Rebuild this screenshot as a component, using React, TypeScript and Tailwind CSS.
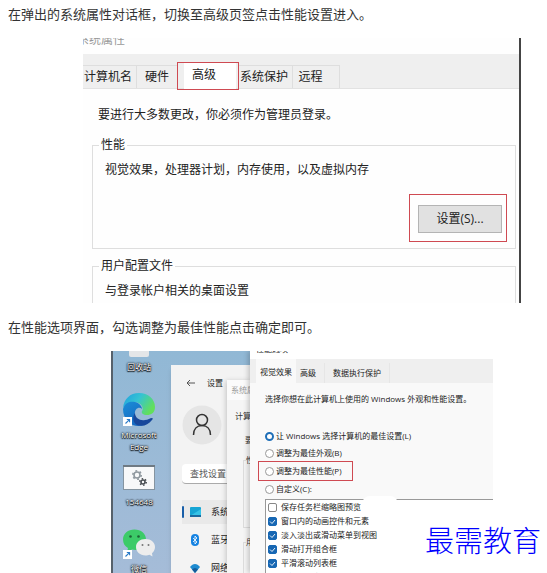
import { useState } from "react";
import type { ReactNode } from "react";

const systemTabs = ["计算机名", "硬件", "高级", "系统保护", "远程"];

const effectModes = [
  "让 Windows 选择计算机的最佳设置(L)",
  "调整为最佳外观(B)",
  "调整为最佳性能(P)",
  "自定义(C):",
];

const effects = [
  { label: "保存任务栏缩略图预览", on: false },
  { label: "窗口内的动画控件和元素", on: true },
  { label: "淡入淡出或滑动菜单到视图", on: true },
  { label: "滑动打开组合框", on: true },
  { label: "平滑滚动列表框", on: true },
  { label: "平滑屏幕字体边缘", on: true },
];

function Shortcut() {
  return (
    <g>
      <rect x="0" y="24" width="9" height="9" fill="#fff" />
      <path d="M2.5 30.5 6.2 26.8M3.8 26.5h2.8v2.8" fill="none" stroke="#2b7bc8" strokeWidth="1.1" />
    </g>
  );
}

function EdgeIcon() {
  return (
    <svg width="32" height="34" viewBox="0 0 32 34" aria-hidden="true">
      <defs>
        <linearGradient id="edge-top" x1="0" y1="0" x2="1" y2="0.5">
          <stop offset="0" stopColor="#1e9fe0" />
          <stop offset="0.5" stopColor="#35c3d3" />
          <stop offset="1" stopColor="#62df5c" />
        </linearGradient>
        <linearGradient id="edge-left" x1="0" y1="0" x2="0.6" y2="1">
          <stop offset="0" stopColor="#1a8ed8" />
          <stop offset="1" stopColor="#1667c0" />
        </linearGradient>
      </defs>
      <path d="M0 15C1 6 7 0 16 0c9 0 16 6 16 14 0 6-4 8-8 8-4 0-6-2-5-4 1-1 1-3 0-5C16 8 5 7 0 15Z" fill="url(#edge-top)" />
      <path d="M0 16C2 9 8 8 12 9c5 1 7 5 7 7-3-3-8 0-7 6 1 5 5 9 9 10-9 4-21-3-21-16Z" fill="url(#edge-left)" />
      <path d="M12 20c0 5 5 8 10 7 3 0 5-2 7-2 1 0 1 1 0 2-4 5-9 7-15 5-4-2-5-8-2-12Z" fill="#17479b" />
      <Shortcut />
    </svg>
  );
}

function Gear({ x, y, r, color }: { x: number; y: number; r: number; color: string }) {
  return (
    <g fill="none" stroke={color}>
      <circle cx={x} cy={y} r={r} strokeWidth="1.6" />
      <circle cx={x} cy={y} r={r + 1.2} strokeWidth="1.6" strokeDasharray={`${(r + 1.2) * 0.45} ${(r + 1.2) * 0.597}`} />
    </g>
  );
}

function BatchIcon() {
  return (
    <svg width="32" height="25" viewBox="0 0 32 25" aria-hidden="true">
      <rect x="0.5" y="0.5" width="31" height="24" fill="#f7f8f9" stroke="#8594a0" />
      <rect width="32" height="2" fill="#6f7a83" />
      <Gear x={14} y={10} r={3} color="#8f989f" />
      <Gear x={20} y={17} r={2} color="#4a4f54" />
    </svg>
  );
}

function WechatIcon() {
  return (
    <svg width="32" height="33" viewBox="0 0 32 33" aria-hidden="true">
      <path d="M11.500 3.500C5 3.500 0 7.500 0 13.500c0 4 2 7 5 8.500l-1 4 5-2.500c8 2 14-3 14-10C23 7.500 18 3.500 11.500 3.500Z" fill="#3ccb68" />
      <path d="M22.500 13C17 13 13 16.500 13 21s4 8.500 9.500 8.500c1.500 0 3-.3 4-.8l3 1.800-.5-3.200c1.800-1.500 3-3.800 3-6.300 0-4.500-4-8-9.500-8Z" fill="#ededed" />
      <circle cx="7.500" cy="10.500" r="1.300" fill="#1c6336" />
      <circle cx="15.500" cy="10.500" r="1.300" fill="#1c6336" />
      <circle cx="19.500" cy="19" r="1" fill="#777" />
      <circle cx="25.500" cy="19" r="1" fill="#777" />
      <Shortcut />
    </svg>
  );
}

function DesktopLabel({ children }: { children: ReactNode }) {
  return (
    <span className="text-center text-[8px] leading-[12px] text-white [text-shadow:0_0_2px_#000,0_0_2px_#000,0_1px_1px_#000]">
      {children}
    </span>
  );
}

function SystemProperties() {
  return (
    <section className="h-[265px] overflow-hidden border-r-2 border-[#444] bg-[#fefefe] text-xs leading-4 text-[#222]">
      <div className="flex h-2 items-end overflow-hidden text-[#999]">
        <h2 className="-ml-1.5 leading-3">系统属性</h2>
      </div>
      <div className="mt-2 flex h-[35px] items-end border-b border-[#e2e2e2] bg-[#efefef]">
        {systemTabs.map((tab) =>
          tab === "高级" ? (
            <button key={tab} className="-mb-0.5 flex h-7 w-[62px] border border-[#cf4a52] pr-0.5 pl-1.5">
              <span className="flex-1 bg-white pt-1 pl-2 text-left whitespace-nowrap">{tab}</span>
            </button>
          ) : (
            <button
              key={tab}
              className="h-[23px] border-t border-r border-[#dedede] pr-1 pl-px whitespace-nowrap nth-2:w-10 nth-2:border-r-0 nth-2:pl-1 nth-5:w-[47px] nth-5:pr-3"
            >
              {tab}
            </button>
          ),
        )}
      </div>
      <div className="pt-[18px] pr-[3px] pl-[9px]">
        <p className="pl-1.5">要进行大多数更改，你必须作为管理员登录。</p>
        <fieldset className="mt-3.5 h-[112px] border border-[#dedede] pr-2 pl-3">
          <legend className="-ml-1.5 px-0.5">性能</legend>
          <p className="pt-[9px]">视觉效果，处理器计划，内存使用，以及虚拟内存</p>
          <div className="mt-4 ml-auto h-12 w-[98px] border border-[#cf4a52] pt-2.5 pr-1 pl-2">
            <button className="h-7 w-full border border-[#b4b4b4] bg-[#e1e1e1]">设置(S)...</button>
          </div>
        </fieldset>
        <fieldset className="mt-[9px] h-14 border border-[#dedede] pl-3">
          <legend className="-ml-1.5 px-0.5">用户配置文件</legend>
          <p className="pt-[9px]">与登录帐户相关的桌面设置</p>
        </fieldset>
      </div>
    </section>
  );
}

function SettingsWindow() {
  return (
    <div className="absolute top-3.5 left-[58px] h-[220px] w-20 bg-[#f3f3f3] pl-[11px] text-[9px] text-[#222] shadow-md">
      <div className="flex h-9 items-center gap-3 pl-1">
        <svg width="9" height="8" viewBox="0 0 9 8" fill="none" stroke="#555" aria-hidden="true">
          <path d="M9 4H1M4 1 1 4l3 3" />
        </svg>
        <h2 className="text-[8px]">设置</h2>
      </div>
      <svg className="mt-1" width="40" height="40" viewBox="0 0 40 40" fill="none" stroke="#333" strokeWidth="1.500" aria-hidden="true">
        <circle cx="20" cy="20" r="19.500" fill="#e5e5e5" stroke="none" />
        <circle cx="20" cy="15" r="5.500" />
        <path d="M11.500 30c0-6 3.500-9.500 8.500-9.500s8.500 3.500 8.500 9.500" />
      </svg>
      <input
        aria-label="查找设置"
        placeholder="查找设置"
        className="mt-[19px] h-5 w-full rounded-l-sm border-b border-[#aaa] bg-white pl-2 placeholder:text-[#555]"
      />
      <nav className="mt-4 flex flex-col gap-1">
        <a href="#system" className="flex h-6 items-center bg-[#e9e9e9]">
          <span className="h-3 w-0.5 rounded bg-[#185ea8]" />
          <svg className="mr-2.5 ml-1.5" width="11" height="10" viewBox="0 0 11 10" aria-hidden="true">
            <rect width="11" height="9" rx="1" fill="#15a4d4" />
            <path d="M0 9 11 2v7Z" fill="#34c2e6" />
            <path d="M0 8h11v2H0Z" fill="#1a699f" />
          </svg>
          系统
        </a>
        <a href="#bluetooth" className="flex h-6 items-center pl-2">
          <svg className="mr-[11px]" width="10" height="12" viewBox="0 0 10 12" aria-hidden="true">
            <rect x="1" width="8" height="12" rx="4" fill="#1683e2" />
            <path d="m3 4 4 4-2 2V2l2 2-4 4" fill="none" stroke="#fff" strokeWidth="0.800" />
          </svg>
          蓝牙
        </a>
        <a href="#network" className="flex h-6 items-center pl-2">
          <svg className="mr-[11px]" width="10" height="9" viewBox="0 0 10 9" aria-hidden="true">
            <path d="M0 3c3-4 7-4 10 0L5 9Z" fill="#1e8bd0" />
            <path d="M2 5.500c2-2 4-2 6 0L5 9Z" fill="#155c9b" />
          </svg>
          网络
        </a>
      </nav>
    </div>
  );
}

function BackDialog() {
  return (
    <div className="absolute top-[29px] left-[114px] h-[200px] w-6 overflow-hidden bg-[#f5f5f5] text-[8px] whitespace-nowrap text-[#333] shadow-[-1px_1px_5px_#0003]">
      <p className="h-5 bg-[#fbfbfb] pl-1 leading-[20px] text-[#999]">系统属性</p>
      <p className="mt-2 pl-2 leading-[16px]">计算机名</p>
      <p className="mt-2 pl-[18px] leading-[16px]">要进行</p>
      <fieldset className="mt-1.5 ml-4 h-[74px] w-20 border border-[#ddd] pl-0.5">
        <legend className="leading-[12px]">性能</legend>
      </fieldset>
      <fieldset className="mt-2 ml-4 h-20 w-20 border border-[#ddd] pl-0.5">
        <legend className="leading-[12px]">用户</legend>
      </fieldset>
    </div>
  );
}

function PerformanceOptions() {
  const [mode, setMode] = useState(0);
  const [checked, setChecked] = useState(effects.map((effect) => effect.on));

  return (
    <div className="absolute inset-y-0 right-0 left-[137px] overflow-hidden bg-[#f9f9f9] text-[8px] whitespace-nowrap text-[#222] shadow-[-2px_0_5px_#0003]">
      <div className="flex h-2 items-end overflow-hidden bg-white pb-1 pl-1.5">
        <h2 className="leading-[12px]">性能选项</h2>
      </div>
      <div className="flex h-6 items-end bg-[#efefef] pl-1.5">
        <button className="h-6 bg-[#f9f9f9] px-1 pt-0.5">视觉效果</button>
        <button className="h-5 w-6 text-center">高级</button>
        <button className="ml-1 h-5 border-x border-[#e6e6e6] px-2">数据执行保护</button>
      </div>
      <p className="mt-2 pl-[15px] leading-[16px]">选择你想在此计算机上使用的 Windows 外观和性能设置。</p>
      <div className="mt-5 flex flex-col items-start pl-2">
        {effectModes.map((label, i) => (
          <label
            key={label}
            className="flex h-4 items-center gap-0.5 border border-transparent pl-1.5 nth-1:h-[18px] nth-3:h-5 nth-3:w-[95px] nth-3:border-[#cf4a52]"
          >
            <input
              type="radio"
              name="mode"
              checked={mode === i}
              onChange={() => setMode(i)}
              className="size-[9px] appearance-none rounded-full border border-[#999] bg-white checked:border-2 checked:border-[#1f6fb8]"
            />
            {label}
          </label>
        ))}
      </div>
      <div className="relative mt-0.5 ml-[15px] h-[90px] border-t border-l border-[#999] bg-white pl-0.5">
        <span className="absolute -top-1 left-24 h-2 w-9 rounded-t-full bg-white" />
        {effects.map((effect, i) => (
          <label key={effect.label} className="flex h-3.5 items-center gap-1">
            <span className="relative flex">
              <input
                type="checkbox"
                checked={checked[i]}
                onChange={() => setChecked(checked.map((on, j) => (j === i ? !on : on)))}
                className="size-[9px] appearance-none rounded-xs border border-[#888] bg-white checked:border-[#1767b3] checked:bg-[#1767b3]"
              />
              {checked[i] && (
                <svg className="pointer-events-none absolute inset-0" width="9" height="9" viewBox="0 0 9 9" aria-hidden="true">
                  <path d="m2 4.500 2 2 3-3.500" fill="none" stroke="#fff" strokeWidth="0.900" />
                </svg>
              )}
            </span>
            {effect.label}
          </label>
        ))}
      </div>
    </div>
  );
}

function Desktop() {
  return (
    <section className="relative h-[222px] overflow-hidden border-l-2 border-[#56616b] bg-linear-to-b from-[#91b8d5] to-[#a5bcd8]">
      <div className="flex w-[52px] flex-col items-center">
        <span className="h-1.5 w-5 rounded-b-xs bg-[#e4e6e8]" />
        <span className="mt-1 mb-5 flex">
          <DesktopLabel>回收站</DesktopLabel>
        </span>
        <EdgeIcon />
        <span className="mt-0.5 mb-3 flex">
          <DesktopLabel>
            Microsoft
            <br />
            Edge
          </DesktopLabel>
        </span>
        <BatchIcon />
        <span className="mt-1.5 mb-[18px] flex">
          <DesktopLabel>154648</DesktopLabel>
        </span>
        <WechatIcon />
        <span className="mt-1 flex">
          <DesktopLabel>微信</DesktopLabel>
        </span>
      </div>
      <SettingsWindow />
      <BackDialog />
      <PerformanceOptions />
    </section>
  );
}

export default function App() {
  return (
    <main className="bg-white font-['Open_Sans','Noto_Sans_CJK_SC',sans-serif]">
      <p className="px-2 pt-1 text-[13px] leading-5 text-[#333]">在弹出的系统属性对话框，切换至高级页签点击性能设置进入。</p>
      <div className="mt-3.5 mr-[26px] ml-[83px]">
        <SystemProperties />
      </div>
      <p className="mt-3.5 px-2 text-[13px] leading-5 text-[#333]">在性能选项界面，勾选调整为最佳性能点击确定即可。</p>
      <div className="relative mt-3.5 pr-[54px] pl-[111px]">
        <Desktop />
        <strong className="absolute right-1.5 bottom-3.5 text-[29px] leading-9 font-light text-[#0000ff]">最需教育</strong>
      </div>
    </main>
  );
}
